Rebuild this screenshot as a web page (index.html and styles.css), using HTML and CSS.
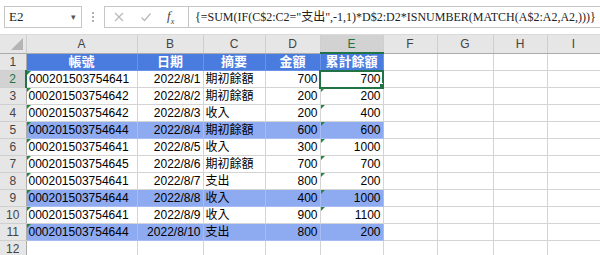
FILE: index.html
```html
<!DOCTYPE html>
<html>

<head>
  <meta charset="utf-8">
  <meta name="viewport" content="width=device-width">
  <title>累計餘額</title>
  <link rel="stylesheet" href="styles.css">
</head>

<body>
  <div class="toolbar">
    <div class="name-box">
      <span>E2</span>
      <span class="drop">&#9662;</span>
    </div>
    <div class="grip"></div>
    <div class="formula-bar">
      <div class="fx-buttons">
        <svg class="btn-icon" width="12" height="12" viewBox="0 0 12 12">
          <path d="M2 2 L10 10 M10 2 L2 10" stroke="#b8b8b8" stroke-width="1.2" fill="none" />
        </svg>
        <svg class="btn-icon" width="12" height="12" viewBox="0 0 12 12">
          <path d="M1.5 6.5 L4.5 9.5 L10.5 2.5" stroke="#b8b8b8" stroke-width="1.3" fill="none" />
        </svg>
        <span class="fx">f<sub>x</sub></span>
      </div>
      <div class="formula">{=SUM(IF(C$2:C2="支出",-1,1)*D$2:D2*ISNUMBER(MATCH(A$2:A2,A2,)))}</div>
    </div>
  </div>

  <table class="sheet">
    <colgroup>
      <col class="c-row">
      <col class="c-a">
      <col class="c-b">
      <col class="c-c">
      <col class="c-d">
      <col class="c-e">
      <col class="c-f">
      <col class="c-g">
      <col class="c-h">
      <col class="c-i">
    </colgroup>
    <thead>
      <tr>
        <th class="corner"><span class="corner-tri"></span></th>
        <th>A</th>
        <th>B</th>
        <th>C</th>
        <th>D</th>
        <th class="col-sel">E</th>
        <th>F</th>
        <th>G</th>
        <th>H</th>
        <th>I</th>
      </tr>
    </thead>
    <tbody id="rows"></tbody>
  </table>

  <script>
    const data = [
      ["000201503754641", "2022/8/1", "期初餘額", 700, 700],
      ["000201503754642", "2022/8/2", "期初餘額", 200, 200],
      ["000201503754642", "2022/8/3", "收入", 200, 400],
      ["000201503754644", "2022/8/4", "期初餘額", 600, 600],
      ["000201503754641", "2022/8/5", "收入", 300, 1000],
      ["000201503754645", "2022/8/6", "期初餘額", 700, 700],
      ["000201503754641", "2022/8/7", "支出", 800, 200],
      ["000201503754644", "2022/8/8", "收入", 400, 1000],
      ["000201503754641", "2022/8/9", "收入", 900, 1100],
      ["000201503754644", "2022/8/10", "支出", 800, 200]
    ];
    const tbody = document.getElementById("rows");

    function emptyCells(n) {
      let html = "";
      for (let i = 0; i < n; i++) html += "<td></td>";
      return html;
    }

    // 標題列
    tbody.innerHTML += `<tr class="title">
      <th class="rh">1</th>
      <td class="center">帳號</td><td class="center">日期</td><td class="center">摘要</td>
      <td class="center">金額</td><td class="center">累計餘額</td>${emptyCells(4)}</tr>`;

    data.forEach((row, i) => {
      const n = i + 2;
      const hl = row[0] === "000201503754644" ? "hl" : "";
      const rh = n === 2 ? "rh row-sel" : "rh";
      const eCls = n === 2 ? "num active" : (n <= 10 ? "num tri" : "num");
      tbody.innerHTML += `<tr class="${hl}">
        <th class="${rh}">${n}</th>
        <td class="tri">${row[0]}</td>
        <td class="num">${row[1]}</td>
        <td class="cjk">${row[2]}</td>
        <td class="num">${row[3]}</td>
        <td class="${eCls}">${row[4]}${n === 2 ? '<span class="handle"></span>' : ''}</td>
        ${emptyCells(4)}</tr>`;
    });

    tbody.innerHTML += `<tr><th class="rh">12</th>${emptyCells(9)}</tr>`;
  </script>
</body>

</html>
```

FILE: styles.css
```css
body {
  margin: 0;
  width: 600px;
  height: 255px;
  overflow: hidden;
  background-color: #ffffff;
  font-family: "Liberation Sans", "Noto Sans CJK TC", sans-serif;
}

/* 上方名稱方塊與資料編輯列 */
.toolbar {
  height: 35px;
  display: flex;
  align-items: center;
  padding-left: 4px;
  box-sizing: border-box;
  background-color: #ffffff;
  border-bottom: 1px solid #dadada;
}

.name-box {
  flex-shrink: 0;
  width: 78px;
  height: 22px;
  box-sizing: border-box;
  border: 1px solid #c6c6c6;
  display: flex;
  align-items: center;
  justify-content: space-between;
  padding: 0 5px 0 4px;
  font-family: "Liberation Serif", serif;
  font-size: 13px;
  color: #222;
}

.drop {
  font-size: 9px;
  color: #555;
}

.grip {
  flex-shrink: 0;
  width: 0;
  height: 10px;
  margin: 0 10px;
  border-left: 2px dotted #b0b0b0;
}

.formula-bar {
  flex: 1;
  min-width: 0;
  height: 22px;
  display: flex;
  box-sizing: border-box;
  border: 1px solid #c6c6c6;
  border-right: none;
}

.fx-buttons {
  flex-shrink: 0;
  width: 84px;
  box-sizing: border-box;
  display: flex;
  align-items: center;
  border-right: 1px solid #c6c6c6;
  padding-left: 8px;
  gap: 15px;
}

.fx {
  font-family: "Liberation Serif", serif;
  font-style: italic;
  font-size: 13px;
  color: #444;
}

.fx sub {
  font-size: 8px;
}

.formula {
  flex: 1;
  min-width: 0;
  padding-left: 6px;
  font-family: "Liberation Serif", "Noto Sans CJK TC", serif;
  font-size: 12px;
  line-height: 20px;
  color: #222;
  white-space: nowrap;
  overflow: hidden;
}

/* 工作表 */
.sheet {
  border-collapse: collapse;
  table-layout: fixed;
  width: 600px;
}

.c-row { width: 26px; }
.c-a { width: 111px; }
.c-b { width: 66px; }
.c-c { width: 62px; }
.c-d { width: 55px; }
.c-e { width: 63px; }
.c-f { width: 54px; }
.c-g { width: 56px; }
.c-h { width: 54px; }
.c-i { width: 53px; }

.sheet thead th {
  height: 17px;
  padding: 0;
  background-color: #e6e6e6;
  border-right: 1px solid #cfcfcf;
  border-bottom: 1px solid #ababab;
  font-weight: normal;
  font-size: 12px;
  color: #444;
}

.sheet thead th.col-sel {
  background-color: #d2d2d2;
  color: #217346;
  border-bottom: 2px solid #217346;
}

.corner {
  position: relative;
}

.corner-tri {
  position: absolute;
  right: 3px;
  bottom: 3px;
  width: 0;
  height: 0;
  border-left: 12px solid transparent;
  border-bottom: 12px solid #b4b4b4;
}

.sheet td {
  height: 16px;
  padding: 0 2px;
  border: 1px solid #d4d4d4;
  font-size: 12px;
  line-height: 16px;
  color: #000;
  white-space: nowrap;
  overflow: hidden;
}

.rh {
  background-color: #e6e6e6;
  border-right: 1px solid #ababab;
  border-bottom: 1px solid #cfcfcf;
  font-weight: normal;
  font-size: 12px;
  color: #444;
  padding: 0;
}

.rh.row-sel {
  background-color: #d2d2d2;
  color: #217346;
  border-right: 2px solid #217346;
}

.num {
  text-align: right;
}

.center {
  text-align: center;
}

.cjk {
  font-size: 13px;
}

.title td:not(:nth-child(n+7)) {
  background-color: #4a7ce0;
  border-color: #6b93e6;
  color: #ffffff;
  font-size: 13px;
  font-weight: bold;
}

.hl td:not(:nth-child(n+7)) {
  background-color: #8eaaf0;
  border-color: #a6bcf2;
}

/* 綠色錯誤提示三角形 */
.tri {
  position: relative;
}

.tri::before {
  content: "";
  position: absolute;
  left: 0;
  top: 0;
  border-top: 4px solid #1e8a3a;
  border-right: 4px solid transparent;
}

.active {
  position: relative;
  outline: 2px solid #217346;
  outline-offset: -1px;
}

.handle {
  position: absolute;
  right: -3px;
  bottom: -3px;
  width: 5px;
  height: 5px;
  background-color: #217346;
  border: 1px solid #ffffff;
}
```
